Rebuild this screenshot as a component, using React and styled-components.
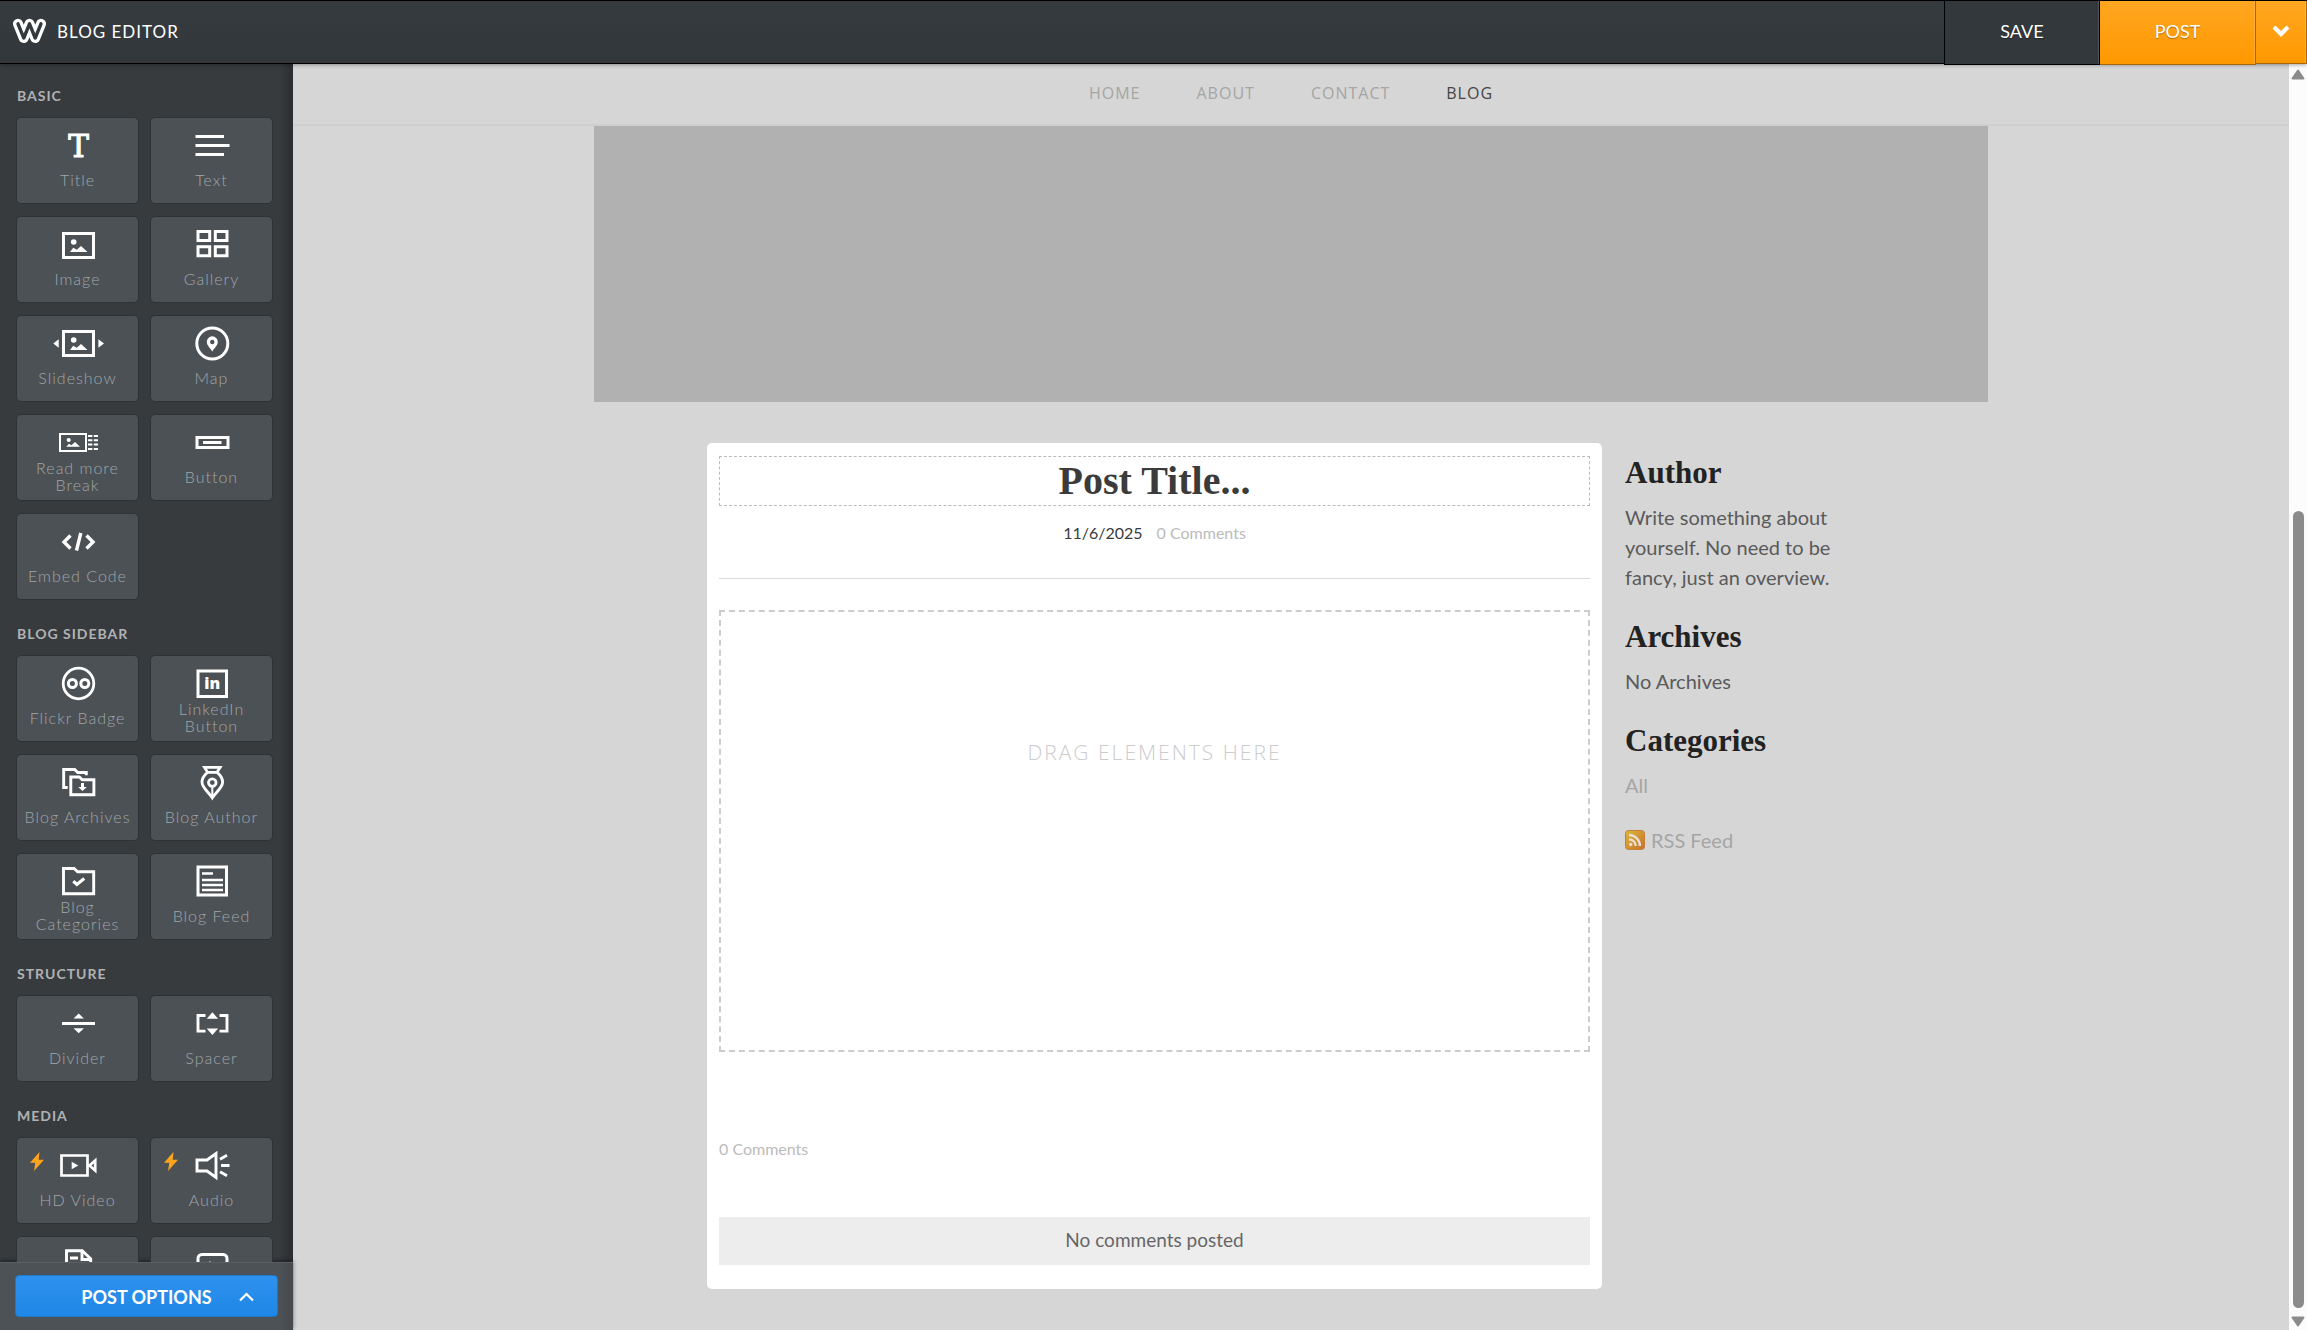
import React from "react";
import styled, { createGlobalStyle } from "styled-components";

const GlobalStyle = createGlobalStyle`
  * {
    box-sizing: border-box;
  }

  body {
    margin: 0;
    background: #d6d6d6;
    font-family: Lato, "Open Sans", sans-serif;
  }

  button {
    font-family: inherit;
    cursor: pointer;
  }

  a {
    color: inherit;
    text-decoration: none;
  }
`;

const Page = styled.div`
  display: flex;
  flex-direction: column;
  height: 100vh;
  overflow: hidden;
`;

const TopBar = styled.header`
  position: relative;
  z-index: 2;
  display: flex;
  align-items: flex-start;
  justify-content: space-between;
  height: 64px;
  flex-shrink: 0;
  background: linear-gradient(#363b40, #32373b);
  border-top: 1px solid #000;
  border-bottom: 1px solid #000;
  box-shadow: 0 1px 4px rgba(0, 0, 0, 0.35);
`;

const Brand = styled.div`
  display: flex;
  align-items: center;
  gap: 10px;
  height: 60px;
  padding-left: 12px;
  color: #fff;
  font-size: 17px;
  letter-spacing: 1px;
`;

const Actions = styled.div`
  display: flex;
`;

const ActionButton = styled.button`
  width: 156px;
  height: 64px;
  padding: 0 0 4px;
  border: 1px solid ${({ $primary }) => ($primary ? "#a56709" : "#000")};
  border-top: 0;
  border-left-width: ${({ $primary }) => ($primary ? "0" : "1px")};
  background: ${({ $primary }) =>
    $primary ? "linear-gradient(#ffa621, #ff9900)" : "#33383c"};
  box-shadow: inset -1px 0 rgba(255, 255, 255, 0.15);
  color: #fff;
  font-size: 18px;
  text-shadow: 0 1px 1px rgba(0, 0, 0, 0.35);
`;

const MoreButton = styled(ActionButton)`
  width: 51px;
  height: 63px;
`;

const Main = styled.div`
  display: flex;
  flex: 1;
  min-height: 0;
`;

const Sidebar = styled.aside`
  display: flex;
  flex-direction: column;
  width: 293px;
  flex-shrink: 0;
  background: linear-gradient(to left, #2b2e31, #373b3e 14px);
`;

const ElementList = styled.div`
  flex: 1;
  min-height: 0;
  padding: 23px 20px 0 16px;
  overflow: hidden;
`;

const GroupTitle = styled.h2`
  height: 18px;
  margin: 0 0 12px;
  padding-left: 1px;
  color: #b0b2b4;
  font-size: 14px;
  line-height: 18px;
  font-weight: 700;
  letter-spacing: 1px;
`;

const Group = styled.section`
  padding-bottom: 25px;
`;

const TileGrid = styled.div`
  display: grid;
  grid-template-columns: 1fr 1fr;
  gap: 12px 11px;
`;

const Tile = styled.button`
  position: relative;
  display: flex;
  flex-direction: column;
  align-items: center;
  height: 87px;
  padding: 11px 0 0;
  border: 1px solid #2e3235;
  border-radius: 5px;
  background: #4c5155;
  color: #a0a6a9;
`;

const TileIcon = styled.svg`
  width: 56px;
  height: 34px;
  flex-shrink: 0;
  overflow: visible;
  fill: #fff;
`;

const TileLabel = styled.span`
  display: flex;
  align-items: center;
  justify-content: center;
  height: 32px;
  font-size: 16px;
  font-weight: 300;
  line-height: 17px;
  letter-spacing: 1px;
  white-space: pre-line;
`;

const Bolt = styled.svg`
  position: absolute;
  top: 14px;
  left: 13px;
  width: 14px;
  height: 19px;
  fill: #ffa41c;
`;

const SidebarFooter = styled.div`
  padding: 12px 15px;
  border-top: 1px solid #5a5f63;
  background: linear-gradient(to left, #45494d, #4d5256 14px);
  box-shadow: 0 -1px 4px rgba(0, 0, 0, 0.5);
`;

const PostOptions = styled.button`
  display: grid;
  grid-template-columns: 1fr auto 1fr;
  align-items: center;
  width: 100%;
  height: 42px;
  margin-bottom: 1px;
  padding: 2px 23px 0;
  border: 1px solid #1b78cb;
  border-radius: 4px;
  background: linear-gradient(#2e91ee, #1f87e6);
  color: #fff;
  font-size: 18px;
  font-weight: 700;

  span {
    grid-column: 2;
  }

  svg {
    justify-self: end;
  }
`;

const Canvas = styled.main`
  flex: 1;
  min-width: 0;
  overflow: hidden;
`;

const SiteNav = styled.nav`
  display: flex;
  justify-content: center;
  gap: 56px;
  height: 62px;
  border-bottom: 2px solid #cfcfcf;
  font-family: "Open Sans", sans-serif;
  font-size: 16px;
  line-height: 58px;
  letter-spacing: 1px;
`;

const NavLink = styled.a`
  color: ${({ $active }) => ($active ? "#444" : "#a5a5a5")};
`;

const Banner = styled.div`
  max-width: 1394px;
  height: 276px;
  margin: 0 auto 41px;
  background: #b1b1b1;
`;

const Columns = styled.div`
  display: flex;
  gap: 23px;
  max-width: 1168px;
  margin: 0 auto;
`;

const PostCard = styled.article`
  flex: 1;
  padding: 13px 12px 24px;
  border-radius: 5px;
  background: #fff;
`;

const TitleInput = styled.input`
  display: block;
  width: 100%;
  height: 50px;
  padding: 0 0 2px;
  border: 1px dashed #bbb;
  background: none;
  color: #3b3b3b;
  font-family: "Liberation Serif", serif;
  font-size: 40px;
  font-weight: 700;
  text-align: center;

  &::placeholder {
    color: #3b3b3b;
    opacity: 1;
  }
`;

const PostMeta = styled.div`
  display: flex;
  justify-content: center;
  gap: 14px;
  padding: 15px 0 33px;
  border-bottom: 1px solid #d9d9d9;
  color: #3b3b3b;
  font-size: 16px;
  line-height: 24px;
`;

const CommentsLink = styled.a`
  color: #bbb;
  font-size: 16px;
  line-height: 24px;
`;

const DropZone = styled.div`
  display: flex;
  justify-content: center;
  height: 442px;
  margin: 31px 0 85px;
  padding-top: 126px;
  border: 2px dashed #ccc;
  color: #ccc;
  font-family: "Open Sans", sans-serif;
  font-size: 21px;
  font-weight: 300;
  line-height: 28px;
  letter-spacing: 2px;
`;

const NoComments = styled.p`
  margin: 56px 0 0;
  padding-bottom: 2px;
  background: #ededed;
  color: #666;
  font-size: 19px;
  line-height: 46px;
  text-align: center;
`;

const BlogAside = styled.aside`
  width: 250px;
  padding-top: 10px;
  color: #5a5a5a;
  font-size: 20px;
  line-height: 30px;
`;

const AsideTitle = styled.h2`
  margin: 0 0 9px;
  color: #222;
  font-family: "Liberation Serif", serif;
  font-size: 31px;
  font-weight: 700;
  line-height: 40px;
`;

const AsideText = styled.p`
  margin: 0 0 25px;
`;

const AsideLink = styled.a`
  display: flex;
  align-items: center;
  gap: 6px;
  margin-bottom: 25px;
  color: #a5a5a5;
`;

const ScrollTrack = styled.div`
  display: flex;
  flex-direction: column;
  align-items: center;
  width: 18px;
  flex-shrink: 0;
  padding: 5px 0 3px;
  background: #fcfcfc;
`;

const ScrollSpace = styled.div`
  flex: 431;
`;

const ScrollThumb = styled.div`
  flex: 797;
  width: 11px;
  margin-bottom: 8px;
  border-radius: 6px;
  background: #8b8b8b;
`;

const Picture = () => (
  <>
    <circle cx="23.7" cy="14" r="2.8" />
    <path d="M20 24l3.2-4.3 3.6 2L31 18l6.5 6z" />
  </>
);

const icons = {
  title: (
    <text
      x="28.5"
      y="28"
      textAnchor="middle"
      fontFamily="DejaVu Serif, serif"
      fontSize="31"
      stroke="#fff"
      strokeWidth="1"
    >
      T
    </text>
  ),
  text: <path d="M11.5 6h28.5v3H11.5zM11.5 15h34v3h-34zM11.5 24h28.5v3H11.5z" />,
  image: (
    <>
      <path d="M13.5 5.5h30v24h-30z" fill="none" stroke="#fff" strokeWidth="3" />
      <Picture />
    </>
  ),
  gallery: (
    <path
      d="M14 3.5h11.7v9H14zM31.3 3.5H43v9H31.3zM14 18.8h11.7v9H14zM31.3 18.8H43v9H31.3z"
      fill="none"
      stroke="#fff"
      strokeWidth="3"
    />
  ),
  slideshow: (
    <>
      <path d="M13.5 4.5h30v24h-30z" fill="none" stroke="#fff" strokeWidth="3" />
      <g transform="translate(0 -1)">
        <Picture />
      </g>
      <path d="M3.3 16.5l5.4-4.2v8.4zM54 16.5l-5.6-4.2v8.4z" />
    </>
  ),
  map: (
    <>
      <circle cx="28.3" cy="16.5" r="15.5" fill="none" stroke="#fff" strokeWidth="3" />
      <path
        fillRule="evenodd"
        d="M28.3 24.5c-2-3.2-5.5-6-5.5-9.7a5.5 5.5 0 0 1 11 0c0 3.7-3.5 6.5-5.5 9.7zM28.3 12.8a2.2 2.2 0 1 0 0 4.4 2.2 2.2 0 0 0 0-4.4z"
      />
    </>
  ),
  readMore: (
    <>
      <path d="M10 8h26v17H10z" fill="none" stroke="#fff" strokeWidth="2" />
      <circle cx="18.7" cy="14" r="2.1" />
      <path d="M16.3 20.8l2.7-3 2.5 1.5 3.5-3.3 5 4.8z" />
      <path
        d="M38 10h4.4m1.4 0H48M38 14.3h4.4m1.4 0H48M38 18.6h4.4m1.4 0H48M38 23h4.4m1.4 0H48"
        stroke="#fff"
        strokeWidth="2"
      />
    </>
  ),
  button: (
    <>
      <path d="M13 11.5h31v10H13z" fill="none" stroke="#fff" strokeWidth="3" />
      <path d="M19 15h18.5v3H19z" />
    </>
  ),
  embed: (
    <path
      d="M20.5 10.5L14 17l6.5 6.5M30.8 8l-4.3 17.5M36.5 10.5L43 17l-6.5 6.5"
      fill="none"
      stroke="#fff"
      strokeWidth="3.4"
    />
  ),
  flickr: (
    <g fill="none" stroke="#fff">
      <circle cx="28.5" cy="16.5" r="15.3" strokeWidth="2.8" />
      <circle cx="22.4" cy="16.5" r="4" strokeWidth="3" />
      <circle cx="34.8" cy="16.5" r="4" strokeWidth="3" />
    </g>
  ),
  linkedin: (
    <>
      <path d="M14 4h28.5v25.5H14z" fill="none" stroke="#fff" strokeWidth="3" />
      <text
        x="28.3"
        y="22"
        textAnchor="middle"
        fontFamily="Open Sans, sans-serif"
        fontWeight="800"
        fontSize="16"
      >
        in
      </text>
    </>
  ),
  archives: (
    <>
      <path
        d="M17.7 21.5h-4V3.5h11l3 3h8.6v2.7M20.8 11h8.5l3 2.8h11.6v15H20.8z"
        fill="none"
        stroke="#fff"
        strokeWidth="2.9"
      />
      <path d="M31 17h3v4h2.8l-4.3 4-4.3-4H31z" />
    </>
  ),
  author: (
    <g fill="none" stroke="#fff" strokeWidth="2.8">
      <path d="M20.5 1.4h15.6l-3.2 5h-9.2zM23.5 6.4c-3 2.6-5.7 5.6-5.5 10 .2 5.6 7 10 10.3 15.4 3.3-5.4 10.1-9.8 10.3-15.4.2-4.4-2.5-7.4-5.5-10" />
      <circle cx="28.3" cy="16.6" r="3.8" />
      <path d="M28.3 20.5v11" strokeWidth="2" />
    </g>
  ),
  categories: (
    <g fill="none" stroke="#fff">
      <path d="M13.5 3.5h10.6l3.5 3.2h16.1v22H13.5z" strokeWidth="2.9" />
      <path d="M23.3 16.2l3.6 3.2 7.3-6" strokeWidth="3.2" />
    </g>
  ),
  feed: (
    <>
      <path d="M14 2h28.5v28H14z" fill="none" stroke="#fff" strokeWidth="3" />
      <path d="M18 8.5h11M18 15h21M18 20h21M18 25h21" stroke="#fff" strokeWidth="2.6" />
    </>
  ),
  divider: (
    <path d="M12 15h33v3H12zM23.5 11.5l5.2-4.9 5.2 4.9zM23.5 21.2l5.2 5 5.2-5z" />
  ),
  spacer: (
    <>
      <path
        d="M21.5 8.5H14v15.6h7.5M35.5 8.5H43v15.6h-7.5"
        fill="none"
        stroke="#fff"
        strokeWidth="2.9"
      />
      <path d="M22.7 11.8l5.7-6.5 5.7 6.5zM22.7 21.5l5.7 6.5 5.7-6.5z" />
    </>
  ),
  video: (
    <>
      <path
        d="M11.5 6.5h26v20h-26zM39.5 16.5l5.7-5v10z"
        fill="none"
        stroke="#fff"
        strokeWidth="2.7"
      />
      <path d="M21.7 12.8l6.6 3.7-6.6 3.7z" />
    </>
  ),
  audio: (
    <path
      d="M13 11h10l9-6.5v24L23 22H13zM36 10.3l7-4M37 16.5h8.5M36 22.7l7 4"
      fill="none"
      stroke="#fff"
      strokeWidth="2.9"
    />
  ),
  document: (
    <path
      d="M16.5 36V2.8h15.7l8.5 8V36M32 2.8v8.7h8.7M20 10h8"
      fill="none"
      stroke="#fff"
      strokeWidth="2.9"
    />
  ),
  youtube: (
    <>
      <rect
        x="14"
        y="6.5"
        width="29"
        height="22"
        rx="4"
        fill="none"
        stroke="#fff"
        strokeWidth="3"
      />
      <path d="M25.5 13l7 4.5-7 4.5z" />
    </>
  ),
};

const groups = [
  {
    title: "BASIC",
    items: [
      { icon: "title", label: "Title" },
      { icon: "text", label: "Text" },
      { icon: "image", label: "Image" },
      { icon: "gallery", label: "Gallery" },
      { icon: "slideshow", label: "Slideshow" },
      { icon: "map", label: "Map" },
      { icon: "readMore", label: "Read more\nBreak" },
      { icon: "button", label: "Button" },
      { icon: "embed", label: "Embed Code" },
    ],
  },
  {
    title: "BLOG SIDEBAR",
    items: [
      { icon: "flickr", label: "Flickr Badge" },
      { icon: "linkedin", label: "LinkedIn\nButton" },
      { icon: "archives", label: "Blog Archives" },
      { icon: "author", label: "Blog Author" },
      { icon: "categories", label: "Blog\nCategories" },
      { icon: "feed", label: "Blog Feed" },
    ],
  },
  {
    title: "STRUCTURE",
    items: [
      { icon: "divider", label: "Divider" },
      { icon: "spacer", label: "Spacer" },
    ],
  },
  {
    title: "MEDIA",
    items: [
      { icon: "video", label: "HD Video", pro: true },
      { icon: "audio", label: "Audio", pro: true },
      { icon: "document", name: "Document" },
      { icon: "youtube", name: "YouTube" },
    ],
  },
];

const navLinks = ["HOME", "ABOUT", "CONTACT", "BLOG"];

const Logo = () => (
  <svg width="35" height="28" viewBox="0 0 35 28" fill="none" aria-hidden="true">
    <g strokeLinecap="round" strokeLinejoin="round">
      <path
        d="M6 6.8l5.8 14.2L17.5 6.8 23.2 21 29 6.8"
        stroke="#fff"
        strokeWidth="10"
      />
      <path
        d="M6 6.8l5.8 14.2L17.5 6.8 23.2 21 29 6.8"
        stroke="#34393d"
        strokeWidth="3.4"
      />
    </g>
  </svg>
);

const RssIcon = () => (
  <svg width="20" height="20" viewBox="0 0 20 20" aria-hidden="true">
    <defs>
      <linearGradient id="rss" x1="0" y1="0" x2="1" y2="1">
        <stop offset="0" stopColor="#dcb83a" />
        <stop offset="1" stopColor="#c8702c" />
      </linearGradient>
    </defs>
    <rect
      x=".5"
      y=".5"
      width="19"
      height="19"
      rx="3"
      fill="url(#rss)"
      stroke="#c48038"
    />
    <circle cx="5.7" cy="14.5" r="1.7" fill="#e8e0d8" />
    <path
      d="M4 9.3a6.7 6.7 0 0 1 6.7 6.7M4 5a11 11 0 0 1 11 11"
      fill="none"
      stroke="#e8e0d8"
      strokeWidth="2.3"
    />
  </svg>
);

const ElementTile = ({ icon, label, name, pro }) => (
  <Tile type="button" aria-label={name}>
    {pro && (
      <Bolt viewBox="0 0 14 19" aria-hidden="true">
        <path d="M9.5 0L0 10.7h5.3L4 19l10-11.3H8.7z" />
      </Bolt>
    )}
    <TileIcon viewBox="0 0 56 34" aria-hidden="true">
      {icons[icon]}
    </TileIcon>
    {label && <TileLabel>{label}</TileLabel>}
  </Tile>
);

const ScrollArrow = ({ down }) => (
  <svg width="14" height="11" viewBox="0 0 14 11" aria-hidden="true">
    <path
      d={down ? "M1.5 1.5h11L7 9.5z" : "M1.5 9.5h11L7 1.5z"}
      fill="#8b8b8b"
      stroke="#8b8b8b"
      strokeWidth="2"
      strokeLinejoin="round"
    />
  </svg>
);

const App = () => {
  return (
    <Page>
      <GlobalStyle />
      <TopBar>
        <Brand>
          <Logo />
          <span>BLOG EDITOR</span>
        </Brand>
        <Actions>
          <ActionButton type="button">SAVE</ActionButton>
          <ActionButton type="button" $primary>
            POST
          </ActionButton>
          <MoreButton type="button" $primary aria-label="More">
            <svg width="18" height="13" viewBox="0 0 18 13" fill="none">
              <path d="M2 3l7 7 7-7" stroke="#fff" strokeWidth="4.2" />
            </svg>
          </MoreButton>
        </Actions>
      </TopBar>

      <Main>
        <Sidebar>
          <ElementList>
            {groups.map((group) => (
              <Group key={group.title}>
                <GroupTitle>{group.title}</GroupTitle>
                <TileGrid>
                  {group.items.map((item) => (
                    <ElementTile key={item.icon} {...item} />
                  ))}
                </TileGrid>
              </Group>
            ))}
          </ElementList>
          <SidebarFooter>
            <PostOptions type="button">
              <span>POST OPTIONS</span>
              <svg width="15" height="10" viewBox="0 0 15 10" fill="none">
                <path d="M1 8.5l6.5-6.5L14 8.5" stroke="#fff" strokeWidth="2.2" />
              </svg>
            </PostOptions>
          </SidebarFooter>
        </Sidebar>

        <Canvas>
          <SiteNav>
            {navLinks.map((link) => (
              <NavLink key={link} href="#" $active={link === "BLOG"}>
                {link}
              </NavLink>
            ))}
          </SiteNav>
          <Banner />
          <Columns>
            <PostCard>
              <TitleInput
                type="text"
                aria-label="Post title"
                placeholder="Post Title..."
              />
              <PostMeta>
                <span>11/6/2025</span>
                <CommentsLink href="#">0 Comments</CommentsLink>
              </PostMeta>
              <DropZone>DRAG ELEMENTS HERE</DropZone>
              <CommentsLink href="#">0 Comments</CommentsLink>
              <NoComments>No comments posted</NoComments>
            </PostCard>
            <BlogAside>
              <AsideTitle>Author</AsideTitle>
              <AsideText>
                Write something about yourself. No need to be fancy, just an
                overview.
              </AsideText>
              <AsideTitle>Archives</AsideTitle>
              <AsideText>No Archives</AsideText>
              <AsideTitle>Categories</AsideTitle>
              <AsideLink href="#">All</AsideLink>
              <AsideLink href="#">
                <RssIcon />
                RSS Feed
              </AsideLink>
            </BlogAside>
          </Columns>
        </Canvas>

        <ScrollTrack>
          <ScrollArrow />
          <ScrollSpace />
          <ScrollThumb />
          <ScrollArrow down />
        </ScrollTrack>
      </Main>
    </Page>
  );
};

export default App;
